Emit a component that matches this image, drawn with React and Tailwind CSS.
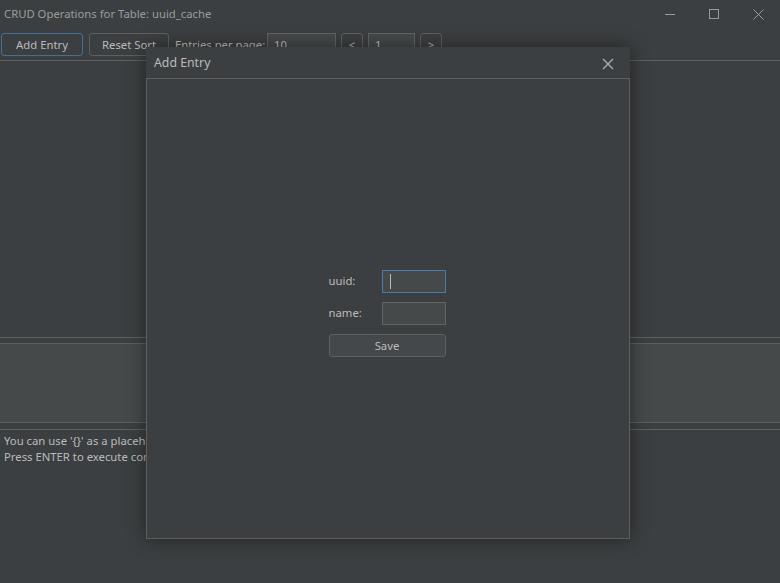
import React from 'react';

const font = { fontFamily: '"Noto Sans", "Open Sans", sans-serif' };

function ToolButton({ children, focused, className = '' }) {
  return (
    <div
      className={
        'h-[23px] flex items-center justify-center pt-[1px] rounded-[3px] border bg-[#3c3f41] text-[11.3px] text-[#bbbbbb] ' +
        (focused ? 'border-[#466d94] ' : 'border-[#5e6060] ') +
        className
      }
    >
      {children}
    </div>
  );
}

function Field({ children, className = '' }) {
  return (
    <div
      className={
        'h-[23px] flex items-center pt-[1px] px-[6px] border border-[#646464] bg-[#45494a] text-[11.3px] text-[#bbbbbb] ' +
        className
      }
    >
      {children}
    </div>
  );
}

function AddEntryDialog() {
  return (
    <div className="absolute left-[146px] top-[47px] w-[484px] h-[492px] flex flex-col bg-[#3c3f41] shadow-[0_0_18px_rgba(0,0,0,0.45)]">
      <div className="h-[31px] flex items-center justify-between pl-[8px] pr-[16px] pt-[2px]">
        <span className="text-[12.3px] text-[#bbbbbb]">Add Entry</span>
        <svg width="12" height="12" viewBox="0 0 12 12">
          <path d="M1 1 L11 11 M11 1 L1 11" stroke="#b0b0b0" strokeWidth="1.2" />
        </svg>
      </div>
      <div className="flex-1 border border-[#5e6060] flex items-center justify-center pt-[10px] pr-[2px]">
        <div className="grid grid-cols-[53px_64px] gap-y-[9px] items-center text-[11.3px] text-[#bbbbbb]">
          <span>uuid:</span>
          <div className="h-[23px] border border-[#4a7bae] bg-[#45494a] flex items-center pl-[7px]">
            <div className="w-px h-[15px] bg-[#bbbbbb]" />
          </div>
          <span>name:</span>
          <div className="h-[23px] border border-[#646464] bg-[#45494a]" />
          <div className="col-span-2 h-[23px] pt-[1px] rounded-[3px] border border-[#5e6060] bg-[#44484a] flex items-center justify-center">
            Save
          </div>
        </div>
      </div>
    </div>
  );
}

export default function App() {
  return (
    <div style={font} className="relative w-[780px] h-[583px] overflow-hidden bg-[#3c3f41] flex flex-col text-[#bbbbbb]">
      <div className="h-[28px] flex items-center justify-between pl-[4px]">
        <span className="text-[11.3px] text-[#9a9c9e]">CRUD Operations for Table: uuid_cache</span>
        <div className="flex items-center h-full">
          <div className="w-[44px] flex justify-center">
            <svg width="10" height="10" viewBox="0 0 10 10">
              <path d="M0 5.5 H10" stroke="#9a9a9a" strokeWidth="1" />
            </svg>
          </div>
          <div className="w-[44px] flex justify-center">
            <svg width="10" height="10" viewBox="0 0 10 10">
              <rect x="0.5" y="0.5" width="9" height="9" fill="none" stroke="#9a9a9a" strokeWidth="1" />
            </svg>
          </div>
          <div className="w-[44px] flex justify-center">
            <svg width="11" height="11" viewBox="0 0 11 11">
              <path d="M0.5 0.5 L10.5 10.5 M10.5 0.5 L0.5 10.5" stroke="#9a9a9a" strokeWidth="1" />
            </svg>
          </div>
        </div>
      </div>

      <div className="h-[32px] flex items-start pt-[5px] pl-[1px]">
        <ToolButton focused className="w-[82px]">Add Entry</ToolButton>
        <ToolButton className="w-[80px] ml-[6px]">Reset Sort</ToolButton>
        <span className="w-[92px] h-[23px] pt-[1px] flex items-center text-[11.3px] ml-[6px]">Entries per page:</span>
        <Field className="w-[69px]">10</Field>
        <ToolButton className="w-[22px] ml-[5px]">&lt;</ToolButton>
        <Field className="w-[47px] ml-[5px]">1</Field>
        <ToolButton className="w-[22px] ml-[5px]">&gt;</ToolButton>
      </div>

      <div className="h-[277px] border-t border-[#5e6060]" />
      <div className="h-[6px] border-t border-[#5e6060]" />
      <div className="h-[80px] border-t border-b border-[#5e6060] bg-[#45494a]" />
      <div className="h-[6px]" />
      <div className="flex-1 border-t border-[#5e6060] pl-[4px] pt-[3px] text-[11.3px] leading-[16px]">
        <div>You can use '{'{}'}' as a placeholder for the selected value.</div>
        <div>Press ENTER to execute command.</div>
      </div>

      <AddEntryDialog />
    </div>
  );
}
